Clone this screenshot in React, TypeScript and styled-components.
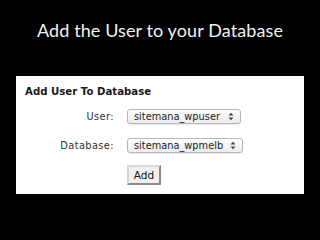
import React from 'react'
import styled, { createGlobalStyle } from 'styled-components'

const GlobalStyle = createGlobalStyle`
	html, body {
		margin: 0;
		padding: 0;
		background: #000;
	}
`

const App = () => {
	return (
		<Slide>
			<GlobalStyle />
			<Title>Add the User to your Database</Title>
			<Panel>
				<PanelHeading>Add User To Database</PanelHeading>
				<Form>
					<Label>User:</Label>
					<Select>
						<span>sitemana_wpuser</span>
						<Arrows />
					</Select>
					<Label>Database:</Label>
					<Select $wide>
						<span>sitemana_wpmelb</span>
						<Arrows />
					</Select>
					<span />
					<AddButton>Add</AddButton>
				</Form>
			</Panel>
		</Slide>
	)
}

export default App

const Arrows = () => (
	<svg width="6" height="9" viewBox="0 0 6 9">
		<path d="M0.5 3.5 L3 0.8 L5.5 3.5 Z" fill="#444" />
		<path d="M0.5 5.5 L3 8.2 L5.5 5.5 Z" fill="#444" />
	</svg>
)

const Slide = styled.div`
	width: 320px;
	height: 240px;
	background: #000;
	display: flex;
	flex-direction: column;
	align-items: center;
	overflow: hidden;
`

const Title = styled.div`
	margin-top: 17px;
	color: #f2f2f2;
	font-family: Lato, 'Open Sans', sans-serif;
	font-size: 18px;
	line-height: 26px;
	letter-spacing: 0.1px;
`

const Panel = styled.div`
	margin-top: 33px;
	width: 288px;
	height: 118px;
	box-sizing: border-box;
	background: #fff;
	padding: 9px 0 0 9px;
`

const PanelHeading = styled.div`
	font-family: 'DejaVu Sans', Verdana, sans-serif;
	font-weight: bold;
	font-size: 10.2px;
	line-height: 13px;
	color: #1a1a1a;
`

const Form = styled.div`
	display: grid;
	grid-template-columns: 89px auto;
	column-gap: 13px;
	row-gap: 14px;
	margin-top: 11px;
	align-items: center;
	justify-items: start;
`

const Label = styled.div`
	justify-self: end;
	font-family: 'DejaVu Sans', Verdana, sans-serif;
	font-size: 9.8px;
	letter-spacing: 0.4px;
	color: #333;
`

const Select = styled.div<{ $wide?: boolean }>`
	display: flex;
	align-items: center;
	justify-content: space-between;
	box-sizing: border-box;
	width: ${(p) => (p.$wide ? 116 : 114)}px;
	height: 15px;
	padding: 0 6px 0 6px;
	border: 1px solid #b8b8b8;
	border-radius: 3px;
	background: linear-gradient(#fdfdfd, #ececec);
	box-shadow: 0 1px 1px rgba(0, 0, 0, 0.08);
	font-family: 'DejaVu Sans', Verdana, sans-serif;
	font-size: 9.8px;
	color: #222;
`

const AddButton = styled.div`
	margin-top: -2px;
	width: 34px;
	height: 20px;
	box-sizing: border-box;
	border: 2px solid;
	border-color: #d8d8d8 #8a8a8a #8a8a8a #d8d8d8;
	background: #f0f0f0;
	display: flex;
	align-items: center;
	justify-content: center;
	font-family: 'DejaVu Sans', Verdana, sans-serif;
	font-size: 10.5px;
	color: #111;
`
